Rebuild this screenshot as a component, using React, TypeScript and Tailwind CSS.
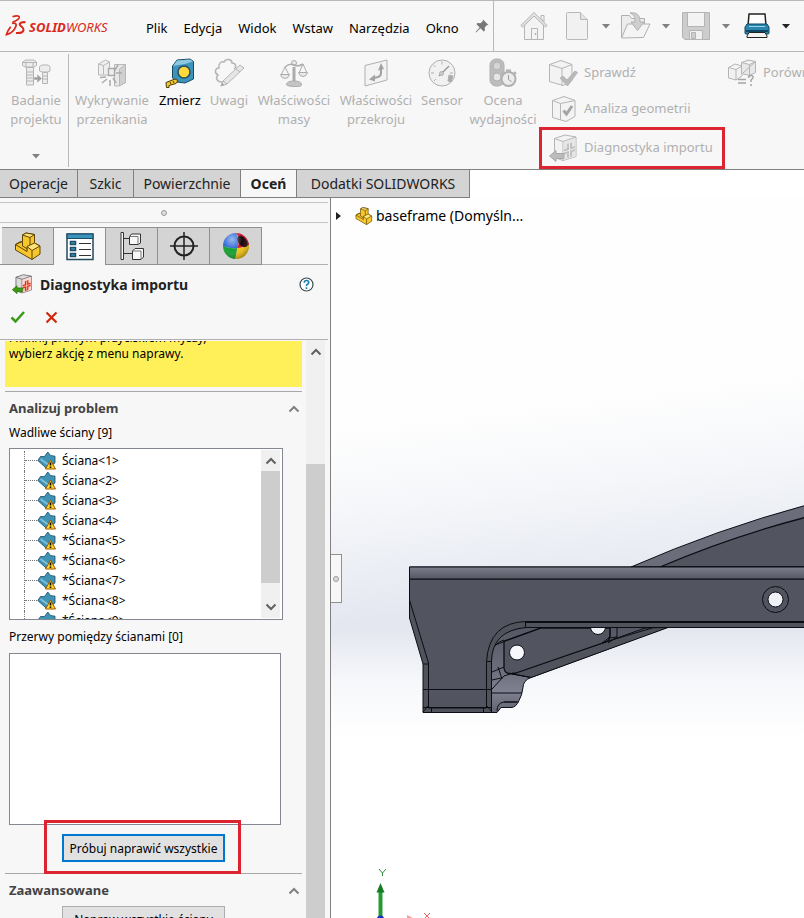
import { ReactNode } from "react";
import { clsx } from "clsx";

const MENU = ["Plik", "Edycja", "Widok", "Wstaw", "Narzędzia", "Okno"];

const FACES = [
  "Ściana<1>",
  "Ściana<2>",
  "Ściana<3>",
  "Ściana<4>",
  "*Ściana<5>",
  "*Ściana<6>",
  "*Ściana<7>",
  "*Ściana<8>",
  "*Ściana<9>",
];

/* ---------- icons ---------- */

function Caret({ dark }: { dark?: boolean }) {
  return (
    <svg width="8" height="5" viewBox="0 0 8 5" aria-hidden="true">
      <path d="M0 0h8L4 4.5z" fill={dark ? "#222" : "#808080"} />
    </svg>
  );
}

function Chevron({ down, color = "#606060" }: { down?: boolean; color?: string }) {
  return (
    <svg width="12" height="8" viewBox="0 0 12 8" fill="none" aria-hidden="true">
      <path d={down ? "M1.5 1.5 6 6l4.5-4.5" : "M1.5 6.5 6 2l4.5 4.5"} stroke={color} strokeWidth="2" />
    </svg>
  );
}

function LogoMark() {
  return (
    <svg width="22" height="22" viewBox="0 0 22 22" fill="none" stroke="#da291c" aria-hidden="true">
      <path d="M7.5 1.8c3-1.2 6.500-1.300 6.800 0 .3 1.500-3.300 4-6.800 5.400" strokeWidth="1.600" />
      <path d="M7 8.300c3.500-.8 5 .4 3.700 3.500C9.500 15 6 18.500 1.500 19.500c.7-2.800 2-5 4.200-7.700" strokeWidth="1.800" />
      <path d="M20.500 7.200c-3-.4-5.600.3-5.800 2-.2 2 4.300 3 3.800 5.800-.5 2.500-3.500 3.300-7.500 3" strokeWidth="2.100" />
    </svg>
  );
}

function PinIcon() {
  return (
    <svg width="14" height="14" viewBox="0 0 14 14" aria-hidden="true">
      <path d="M8 .5 13.500 6l-1.800.3-2 2.200.2 3.300-1.200.7L5.500 9.300 1 13.500l-.5-.5L4.700 8.500 1.500 5.300l.7-1.200 3.300.2 2.200-2z" fill="#777" />
    </svg>
  );
}

function HomeIcon() {
  return (
    <svg width="28" height="28" viewBox="0 0 28 28" fill="#f3f3f3" stroke="#b4b4b4" aria-hidden="true">
      <path d="M4.500 13v14.500h19V13L14 3.500z" />
      <path d="M21 3.500h3v6l-3-3z" />
      <path d="m.8 13.500 13.200-13 13.200 13-1.700 1.500L14 4 2.500 15z" fill="#e4e4e4" />
      <path d="M11.500 27.500v-11h6v11z" />
      <path d="M15.500 21v2" strokeWidth="1.500" />
    </svg>
  );
}

function NewIcon() {
  return (
    <svg width="22" height="28" viewBox="0 0 22 28" fill="#f1f1f1" stroke="#b8b8b8" aria-hidden="true">
      <path d="M.5 1.500q0-1 1-1h13l7 7v19q0 1-1 1h-19q-1 0-1-1z" />
      <path d="M14.500.5v7h7" fill="#e2e2e2" />
    </svg>
  );
}

function OpenIcon() {
  return (
    <svg width="32" height="28" viewBox="0 0 32 28" fill="#ececec" stroke="#b0b0b0" aria-hidden="true">
      <path d="M1.500 26V3.500h8l2 3h13V13" />
      <path d="m1.500 26 6-14H30l-6.500 13.500z" fill="#f4f4f4" />
      <path d="M10 1c7-1 10 2 10 9h4l-6.500 8.500L11 10h4c0-5-1-7-5-9z" fill="#cfcfcf" />
    </svg>
  );
}

function SaveIcon() {
  return (
    <svg width="28" height="28" viewBox="0 0 28 28" fill="#cdcdcd" stroke="#b4b4b4" aria-hidden="true">
      <path d="M.5.500h27v27H3l-2.500-2z" />
      <path d="M5.500.5h17v14h-17z" fill="#f3f3f3" />
      <path d="M7.500 18.500h13v9h-13z" fill="#f0f0f0" />
      <path d="M9.500 20.500h4v6h-4z" />
    </svg>
  );
}

function PrintIcon() {
  return (
    <svg width="26" height="26" viewBox="0 0 26 26" stroke="#222" aria-hidden="true">
      <path d="M5 1h16l1 12H4z" fill="#fff" strokeWidth="1.500" />
      <path d="M3 11h20l2 3v6q0 1-1 1H2q-1 0-1-1v-6z" fill="#2b86ad" stroke="#0d4764" />
      <path d="M5 13.500h16" stroke="#9bd3ea" />
      <path d="M2 18h22" stroke="#0d4764" strokeWidth="2" />
      <path d="M5 19.500h16L23 23v1.500H3V23z" fill="#f2f2f2" />
    </svg>
  );
}

function BoltsIcon() {
  return (
    <svg width="30" height="28" viewBox="0 0 30 28" fill="#ececec" stroke="#b5b5b5" aria-hidden="true">
      <path d="M1.500 3 5 1h8l2.500 2v3.500L13 8H4L1.500 6.500z" />
      <path d="M1.500 3.500h14M5 3.500V8M12 3.500V8" />
      <path d="M5.500 8.500h7V26h-7z" />
      <path d="M5.500 13h7m-7 3h7m-7 3h7m-7 3h7" />
      <path d="M18.500 7.500 21 6h6l2 1.500V12l-2 1h-6l-2.500-1z" />
      <path d="M21.500 13.500h5v11h-5zM21.500 17h5m-5 3h5" />
      <path d="M13.500 18.500h3V16l4 3.500-4 3.500v-2.500h-3z" fill="#9d9d9d" />
    </svg>
  );
}

function InterferenceIcon() {
  return (
    <svg width="30" height="28" viewBox="0 0 30 28" fill="#efefef" stroke="#b8b8b8" aria-hidden="true">
      <path d="m1.500 5 7-4 4 2v13H1.500z" />
      <path d="m1.500 5 5 1.500v9M6.500 6.500l6-3.500" />
      <path d="M17.500 5.500h11v18l-7 3.500h-4v-13z" fill="#e8e8e8" />
      <path d="M22.500 27V10l6-4.500v18z" fill="#d0d0d0" />
      <path d="M11.500 9.500h6v7h-6zM3 18.500l6-.5m-4 6 5-4m3 7v-6m6 3-3-5m3-5h6m-4-8-3 5" stroke="#aaa" strokeWidth="1.500" />
    </svg>
  );
}

function TapeIcon() {
  return (
    <svg width="30" height="30" viewBox="0 0 30 30" aria-hidden="true">
      <path d="m7.500 8 4.500-6 13-1 3.500 2.500V21L20 25l-8-1-4.500-4z" fill="#3d93b9" stroke="#164b63" />
      <path d="m8 8 4-5.500 13-1 3 2-8 2.500z" fill="#8cc8df" />
      <circle cx="19" cy="14" r="6" fill="#ffd93b" stroke="#274d5c" strokeWidth="1.500" />
      <path d="m1 24.500 9-3.500 3 1.500-2 3-7 2v2H1.500z" fill="#f4c92c" stroke="#4a3b0c" />
      <path d="m5 24 1 2m2-3 1 2" stroke="#4a3b0c" />
    </svg>
  );
}

function MarkupIcon() {
  return (
    <svg width="31" height="30" viewBox="0 0 31 30" fill="none" stroke="#b5b5b5" aria-hidden="true">
      <path d="M8 24c-5 0-7-4-4-7-4-2-3-7 1-7-1-4 2-7 5-6 2-4 8-3 8 1 4 0 5 4 2 6" strokeWidth="1.500" />
      <path d="m9 23 17-16 4 3-17 16-6 2z" fill="#e6e6e6" />
      <path d="m9 23 4 3M22 11l4 3" />
      <path d="m7 28 1-3 2 2z" fill="#999" />
    </svg>
  );
}

function ScaleIcon() {
  return (
    <svg width="28" height="28" viewBox="0 0 28 28" fill="#e9e9e9" stroke="#acacac" aria-hidden="true">
      <path d="M14 8v14" strokeWidth="3" />
      <circle cx="14" cy="4" r="2.500" />
      <path d="M5 8q5-4 9-2 4 2 9-1" fill="none" strokeWidth="1.500" />
      <path d="m5 8-4 8m4-8 4 8M23 5l-4 9m4-9 4 9" fill="none" />
      <path d="M.5 15.500h9q-1 4-4.500 4t-4.500-4zM18.500 13.500h9q-1 4-4.500 4t-4.500-4z" />
      <path d="M6.500 25q1-3 7.500-3t7.500 3-7.500 2.500T6.500 25z" fill="#c4c4c4" />
    </svg>
  );
}

function SectionIcon() {
  return (
    <svg width="24" height="28" viewBox="0 0 24 28" aria-hidden="true">
      <path d="M1 6.500 23 1v20L1 27z" fill="#f3f3f3" stroke="#b0b0b0" />
      <path d="M17 8v6q0 3-3 4l-6 1.500" fill="none" stroke="#a2a2a2" strokeWidth="2" />
      <path d="m17 4 3 6-6 1.500zM5 20.500l6-5v7z" fill="#a2a2a2" />
    </svg>
  );
}

function GaugeIcon() {
  return (
    <svg width="28" height="28" viewBox="0 0 28 28" fill="none" stroke="#b0b0b0" aria-hidden="true">
      <circle cx="14" cy="14" r="13" fill="#f1f1f1" />
      <path d="M14 2.500v3M3 14h3M5.500 6l2 2M25 14h-3M6 22l2-2" />
      <path d="m11 17 10-10" stroke="#999" strokeWidth="1.500" />
      <circle cx="13.500" cy="14.500" r="2" fill="#ccc" />
      <path d="m21 16 4 1-2 6-3-1z" fill="#aaa" />
    </svg>
  );
}

function PerformanceIcon() {
  return (
    <svg width="28" height="30" viewBox="0 0 28 30" fill="#ececec" stroke="#b0b0b0" aria-hidden="true">
      <rect x="1" y="1" width="14" height="27" rx="6" fill="#bdbdbd" />
      <circle cx="8" cy="8" r="4" fill="#d4d4d4" />
      <circle cx="8" cy="19" r="4" fill="#e6e6e6" />
      <circle cx="19.500" cy="21" r="7" strokeWidth="2" />
      <path d="M17 12.500h5M25 14l2 2M13.500 14l-1 1" strokeWidth="2" />
      <path d="M19.500 17v4.500l3 2" fill="none" stroke="#999" />
    </svg>
  );
}

function CubePaths() {
  return (
    <>
      <path d="m1.500 5.500 11.500-4 11 4v16l-9 5-13.500-4z" fill="#f3f3f3" />
      <path d="m1.500 5.500 12.500 4 10-4M14 9.500v17" fill="none" />
    </>
  );
}

function CheckCubeIcon() {
  return (
    <svg width="30" height="28" viewBox="0 0 30 28" stroke="#b5b5b5" aria-hidden="true">
      <CubePaths />
      <path d="m12 19 3-2 4 4 8-9 2.500 1.500L19.500 27z" fill="#b9b9b9" />
    </svg>
  );
}

function GeometryIcon() {
  return (
    <svg width="28" height="28" viewBox="0 0 28 28" stroke="#b5b5b5" aria-hidden="true">
      <g transform="translate(2 0)">
        <path d="m1.500 5.500 11.500-4 11 4v16l-9 5-13.500-4z" fill="#f3f3f3" />
        <path d="m1.500 5.500 8 3 14.500-3M9.500 8.500v16.500" fill="none" />
      </g>
      <path d="m14.500 15.500 3 3.500 5.500-8" fill="none" stroke="#a4a4a4" strokeWidth="3" />
    </svg>
  );
}

function ImportIcon({ size = 28, active }: { size?: number; active?: boolean }) {
  return (
    <svg width={size} height={size} viewBox="0 0 28 28" aria-hidden="true">
      <g stroke={active ? "#555" : "#b5b5b5"}>
        <path d="M5.500 4.500 16 1l11 2v19.500l-13 4-8.500-3z" fill={active ? "#dcdcdc" : "#f3f3f3"} />
        <path d="m5.500 4.500 8.500 3L27 3M14 7.500v19" fill="none" />
      </g>
      <path d="m14.500 8 12-4v18.500l-12 3.500z" fill={active ? "#fbd9d3" : "#e6e6e6"} />
      <path d="m18 10 5-1.500V13l3-1v5l-3 1v4.500L18 24v-4.500l-3 1v-5l3-1z" fill={active ? "#e33118" : "#c2c2c2"} />
      <path d="M20.500 9v14M15 18l11-3.500" stroke={active ? "#fbd9d3" : "#efefef"} />
      <path d="M.5 22 7 16.500v3h8v5H7v3z" fill={active ? "#3d9a10" : "#bcbcbc"} stroke={active ? "#2b7208" : "#a8a8a8"} />
    </svg>
  );
}

function CompareIcon() {
  return (
    <svg width="28" height="28" viewBox="0 0 28 28" fill="#f1f1f1" stroke="#b5b5b5" aria-hidden="true">
      <path d="M.5 8.500 7 5l7 2v10l-6 4-7.500-2zM.5 8.500l7.500 2L14 7M8 10.500V21" />
      <path d="m13.500 3.500 7-2.500 7 1.500v11l-6 3-8-2zM13.500 3.500l8 2 6-3M21.500 5.500V16M15 14l12-11" fill="#e8e8e8" />
      <path d="M10 20.500h8M10 24h8" stroke="#a5a5a5" strokeWidth="1.500" />
      <path d="M20.500 19q0-2.500 2.500-2.500t2 2.500l-2 2v2m0 2v2" fill="none" stroke="#a5a5a5" strokeWidth="1.500" />
    </svg>
  );
}

function PartIcon({ size = 28 }: { size?: number }) {
  return (
    <svg width={size} height={size} viewBox="0 0 28 28" stroke="#5e4500" strokeLinejoin="round" aria-hidden="true">
      <path d="M8.500 3 12 1l8.500 1.500V11l5.500 3v8l-8 5.500L1.500 18v-5.500l7-3z" fill="#f6c62c" />
      <path d="M8.500 3 12 1l8.500 1.500-4.500 3z" fill="#ffe27a" />
      <path d="m1.500 12.500 5-3 2 .5v4l5 3" fill="none" />
      <path d="m13 14.500 7.500-3.500 5.500 3-8 4.500z" fill="#ffe27a" />
      <path d="M16 5.500V13M18 18.500v9M1.500 12.500 13 19.500v-5" fill="none" />
    </svg>
  );
}

function PropertyIcon() {
  return (
    <svg width="28" height="28" viewBox="0 0 28 28" aria-hidden="true">
      <path d="M1 1h26v25.500H1z" fill="#fff" stroke="#244a5c" strokeWidth="1.500" />
      <path d="M1 1h26v4.500H1z" fill="#3a93bb" stroke="#1c4d66" />
      <path d="M4.500 8.500h5v3h-5zM4.500 14.500h5v3h-5zM4.500 20.500h5v3h-5z" fill="#3a93bb" stroke="#1c4d66" strokeWidth="1.500" />
      <path d="M13 10.500h12M13 16.500h12M13 22.500h12" stroke="#333" />
    </svg>
  );
}

function ConfigIcon() {
  return (
    <svg width="24" height="28" viewBox="0 0 24 28" fill="#f8f8f8" stroke="#333" aria-hidden="true">
      <path d="M1 .5h2.500v27H1zM3.500 6.500H10M3.500 21.500H13" />
      <path d="m9.500 4.500 2-2.500h9v9L18 12.500H9.500zM12.500 19l2.500-2.500h8.500V25L21 27.500h-8.500z" />
      <path d="M9.500 4.500H18v8M12.500 19H21v8.500" fill="none" stroke="#777" />
    </svg>
  );
}

function TargetIcon() {
  return (
    <svg width="28" height="28" viewBox="0 0 28 28" fill="none" stroke="#222" aria-hidden="true">
      <circle cx="14" cy="14" r="9.500" strokeWidth="2" />
      <path d="M14 0v28M0 14h28" strokeWidth="1.500" />
    </svg>
  );
}

function AppearanceIcon() {
  return (
    <svg width="28" height="28" viewBox="0 0 28 28" aria-hidden="true">
      <defs>
        <radialGradient id="ball" cx="0.35" cy="0.25" r="0.8">
          <stop offset="0" stopColor="#fff" stopOpacity="0.55" />
          <stop offset="0.5" stopColor="#fff" stopOpacity="0" />
          <stop offset="1" stopColor="#000" stopOpacity="0.35" />
        </radialGradient>
      </defs>
      <path d="M14 1A13 13 0 0 0 1 14q7 3 14 2Q18 8 14 1z" fill="#2563d4" />
      <path d="M14 1q5 6 1 15 7 0 12-3A13 13 0 0 0 14 1z" fill="#c4142c" />
      <path d="M1 14q7 3 14 2 0 6-2 11A13 13 0 0 1 1 14z" fill="#14a030" />
      <path d="M15 16q7 0 12-3a13 13 0 0 1-14 14q2-5 2-11z" fill="#f4c410" />
      <ellipse cx="20.500" cy="9.500" rx="4" ry="6.500" transform="rotate(-38 20.500 9.500)" fill="#180408" />
      <circle cx="14" cy="14" r="13" fill="url(#ball)" />
    </svg>
  );
}

function HelpIcon() {
  return (
    <svg width="15" height="15" viewBox="0 0 15 15" fill="none" aria-hidden="true">
      <circle cx="7.500" cy="7.500" r="6.500" fill="#fff" stroke="#3c4a52" strokeWidth="1.200" />
      <path d="M5.300 5.800q0-2.300 2.200-2.300t2.200 2q0 1.200-1.200 1.800T7.500 9" stroke="#1d7fae" strokeWidth="1.700" />
      <path d="M7.500 10.300V12" stroke="#1d7fae" strokeWidth="1.700" />
    </svg>
  );
}

function FaceIcon() {
  return (
    <svg width="20" height="20" viewBox="0 0 20 20" aria-hidden="true">
      <path d="M.8 9.500 3.500 5.500h4L10.800 1l2.700 3.500 4.500.7V12l-8.500 5.500z" fill="#3f93b5" stroke="#174d63" strokeWidth="0.800" />
      <path d="m3.500 8 8 6" stroke="#7cc0da" strokeWidth="2" />
      <path d="m13.500 9 5 9h-10z" fill="#ffd21f" stroke="#a05a00" strokeLinejoin="round" />
      <path d="M13.500 11.500v3m0 1v1.500" stroke="#111" strokeWidth="1.600" />
    </svg>
  );
}

/* ---------- ribbon ---------- */

interface ToolProps {
  icon: ReactNode;
  label: string;
  className?: string;
  enabled?: boolean;
}

function RibbonTool({ icon, label, className, enabled }: ToolProps) {
  return (
    <button
      type="button"
      disabled={!enabled}
      className={clsx(
        "flex shrink-0 flex-col items-center pt-1 text-[13px] leading-[19px]",
        enabled ? "text-black" : "text-[#b0b0b0]",
        className
      )}
    >
      <span className="mb-px flex h-[34px] items-center">{icon}</span>
      <span className="text-center">{label}</span>
    </button>
  );
}

function RibbonRow({ icon, label, className }: ToolProps) {
  return (
    <button
      type="button"
      disabled
      className={clsx("flex items-center gap-1.5 whitespace-nowrap text-[13px] text-[#b0b0b0]", className)}
    >
      <span className="flex w-[30px] justify-center">{icon}</span>
      {label}
    </button>
  );
}

function TopBar() {
  return (
    <header className="flex h-[52px] shrink-0 items-stretch border-y border-[#b9b9b9]">
      <div className="flex w-[138px] shrink-0 items-center gap-0.5 pl-[5px]">
        <LogoMark />
        <span className="pt-1 text-[13px] italic text-[#da291c]">
          <b>SOLID</b>WORKS
        </span>
      </div>
      <nav className="flex shrink-0 items-center gap-4 pl-2 pt-1.5 text-[13px] text-black">
        {MENU.map((item) => (
          <button key={item} type="button">
            {item}
          </button>
        ))}
        <button type="button" aria-label="Przypnij menu" className="pb-1.5">
          <PinIcon />
        </button>
      </nav>
      <div className="ml-1 flex shrink-0 items-center border-l border-[#b9b9b9] pl-[26px]">
        <button type="button" aria-label="Strona główna" disabled className="w-11">
          <HomeIcon />
        </button>
        <button type="button" aria-label="Nowy" disabled className="flex w-[56px] items-center gap-3.5 pl-0.5">
          <NewIcon />
          <Caret />
        </button>
        <button type="button" aria-label="Otwórz" disabled className="flex w-[62px] items-center gap-2.5">
          <OpenIcon />
          <Caret />
        </button>
        <button type="button" aria-label="Zapisz" disabled className="flex w-[62px] items-center gap-3">
          <SaveIcon />
          <Caret />
        </button>
        <button type="button" aria-label="Drukuj" className="flex items-center gap-3">
          <PrintIcon />
          <Caret dark />
        </button>
      </div>
    </header>
  );
}

function Ribbon() {
  return (
    <div className="flex h-[118px] shrink-0 items-stretch overflow-hidden border-b border-[#808080]">
      <div className="flex w-[68px] shrink-0 flex-col items-center pb-2.5 pl-1">
        <RibbonTool icon={<BoltsIcon />} label="Badanie projektu" className="w-16" />
        <span className="mt-auto">
          <Caret />
        </span>
      </div>
      <div className="my-0.5 w-px shrink-0 bg-[#b9b9b9]" />
      <RibbonTool icon={<InterferenceIcon />} label="Wykrywanie przenikania" className="w-[86px]" />
      <RibbonTool icon={<TapeIcon />} label="Zmierz" className="w-[50px]" enabled />
      <RibbonTool icon={<MarkupIcon />} label="Uwagi" className="w-12" />
      <RibbonTool icon={<ScaleIcon />} label="Właściwości masy" className="w-[82px]" />
      <RibbonTool icon={<SectionIcon />} label="Właściwości przekroju" className="w-[82px]" />
      <RibbonTool icon={<GaugeIcon />} label="Sensor" className="w-[50px]" />
      <RibbonTool icon={<PerformanceIcon />} label="Ocena wydajności" className="w-[72px] grow-0" />
      <div className="flex w-[186px] shrink-0 flex-col pt-0.5">
        <RibbonRow icon={<CheckCubeIcon />} label="Sprawdź" className="h-[38px] pl-[9px]" />
        <RibbonRow icon={<GeometryIcon />} label="Analiza geometrii" className="h-9 pl-[9px]" />
        <RibbonRow icon={<ImportIcon />} label="Diagnostyka importu" className="h-[43px] border-3 border-[#dc2430] pl-1.5" />
      </div>
      <div className="flex shrink-0 flex-col pt-0.5">
        <RibbonRow icon={<CompareIcon />} label="Porównaj dokumenty" className="h-[38px] pl-0.5" />
      </div>
    </div>
  );
}

function CommandTabs() {
  const tab = "border-r border-b border-[#808080] bg-[#d4d4d4]";
  return (
    <div role="tablist" className="flex h-7 shrink-0 bg-white text-[14px] text-[#222]">
      <button role="tab" type="button" className={clsx(tab, "w-[78px]")}>
        Operacje
      </button>
      <button role="tab" type="button" className={clsx(tab, "w-14")}>
        Szkic
      </button>
      <button role="tab" type="button" className={clsx(tab, "w-[107px]")}>
        Powierzchnie
      </button>
      <button role="tab" type="button" aria-selected="true" className="w-[55px] border-b border-[#808080] bg-[#f7f7f7] font-bold">
        Oceń
      </button>
      <button role="tab" type="button" className={clsx(tab, "w-[174px] border-l")}>
        Dodatki SOLIDWORKS
      </button>
    </div>
  );
}

/* ---------- property manager ---------- */

function SectionHeading({ title }: { title: string }) {
  return (
    <div className="ml-[5px] border-t border-[#a8a8a8]">
      <button type="button" className="flex h-8 w-full items-center justify-between pl-1 pr-0.5 pt-px text-[13px] font-bold text-[#444]">
        {title}
        <Chevron color="#808080" />
      </button>
    </div>
  );
}

function FaceList() {
  return (
    <div className="ml-[9px] flex h-[172px] w-[274px] overflow-hidden border border-[#828790] bg-white py-px pr-0.5">
      <ul aria-label="Wadliwe ściany" className="min-w-0 flex-1 pt-px">
        {FACES.map((face) => (
          <li key={face} className="flex h-5 items-center pl-3.5 text-[12px] text-black">
            <span className="h-5 w-[13px] border-l border-dotted border-[#777]">
              <span className="block h-2.5 border-b border-dotted border-[#777]" />
            </span>
            <FaceIcon />
            <span className="pl-[5px]">{face}</span>
          </li>
        ))}
      </ul>
      <div className="flex w-[19px] flex-col items-center bg-[#f0f0f0]">
        <span className="flex h-[21px] items-center">
          <Chevron />
        </span>
        <span className="h-28 w-full bg-[#cdcdcd]" />
        <span className="mt-auto flex h-[22px] items-center">
          <Chevron down />
        </span>
      </div>
    </div>
  );
}

function PropertyPanel() {
  const tab = "flex w-[52px] items-center justify-center border-y border-r border-[#909090] bg-[#d4d4d4]";
  return (
    <aside className="flex w-[330px] shrink-0 flex-col bg-[#f7f7f7]">
      <div className="mr-0.5 mt-1 flex h-[21px] shrink-0 items-center justify-center border-y border-[#c4c4c4]">
        <span className="size-1.5 rounded-full border border-[#999] bg-[#ddd]" />
      </div>

      <div role="tablist" className="mr-0.5 mt-1 flex h-[38px] shrink-0">
        <span className="w-0.5 border-b border-[#909090]" />
        <button role="tab" type="button" aria-label="Drzewo operacji" className={tab}>
          <PartIcon />
        </button>
        <button role="tab" type="button" aria-label="Właściwości" aria-selected="true" className="flex w-[52px] items-center justify-center border-r border-t border-[#909090]">
          <PropertyIcon />
        </button>
        <button role="tab" type="button" aria-label="Konfiguracje" className={tab}>
          <ConfigIcon />
        </button>
        <button role="tab" type="button" aria-label="Wymiary" className={tab}>
          <TargetIcon />
        </button>
        <button role="tab" type="button" aria-label="Wygląd" className={tab}>
          <AppearanceIcon />
        </button>
        <span className="flex-1 border-b border-[#b0b0b0]" />
      </div>

      <div className="flex h-[38px] shrink-0 items-center gap-2 pl-3 pr-4">
        <ImportIcon size={20} active />
        <h1 className="flex-1 text-[14px] font-bold text-[#222]">Diagnostyka importu</h1>
        <button type="button" aria-label="Pomoc">
          <HelpIcon />
        </button>
      </div>

      <div className="mr-0.5 flex h-[37px] shrink-0 items-start gap-5 border-b border-[#b0b0b0] pl-2.5 pt-[7px]">
        <button type="button" aria-label="OK">
          <svg width="16" height="14" viewBox="0 0 16 14" fill="none" aria-hidden="true">
            <path d="m1.500 7.500 4 4L14 2" stroke="#3a9a18" strokeWidth="2.500" />
          </svg>
        </button>
        <button type="button" aria-label="Anuluj">
          <svg width="12" height="14" viewBox="0 0 12 14" fill="none" aria-hidden="true">
            <path d="m.5 2.500 10 10m0-10-10 10" stroke="#d0280a" strokeWidth="2.200" />
          </svg>
        </button>
      </div>

      <div className="flex min-h-0 flex-1">
        <div className="w-[302px] overflow-hidden text-[12px] text-black">
          <div className="ml-[5px] mt-px flex h-[46px] flex-col overflow-hidden bg-[#fff05a]">
            <p className="-mt-[11px] whitespace-nowrap pl-1 leading-4">i kliknij prawym przyciskiem myszy,</p>
            <p className="pl-1 leading-4">wybierz akcję z menu naprawy.</p>
          </div>
          <div className="h-1" />
          <SectionHeading title="Analizuj problem" />
          <p className="flex h-6 items-start pl-[9px] leading-[18px]">Wadliwe ściany [9]</p>
          <FaceList />
          <p className="flex h-[33px] items-center pl-[9px] pt-px">Przerwy pomiędzy ścianami [0]</p>
          <div className="ml-[9px] h-[172px] w-[272px] border border-[#828790] bg-white" />
          <div className="flex h-12 items-start pl-[62px] pt-[9px]">
            <div className="relative">
              <button type="button" className="h-7 w-[163px] whitespace-nowrap border-2 border-[#0078d0] bg-[#e1e1e1] pt-px">
                Próbuj naprawić wszystkie
              </button>
              <span className="pointer-events-none absolute -bottom-3 -left-[18px] -right-4 -top-3.5 border-3 border-[#dc2430]" />
            </div>
          </div>
          <SectionHeading title="Zaawansowane" />
          <button type="button" className="ml-[62px] h-7 w-[163px] whitespace-nowrap border border-[#adadad] bg-[#e1e1e1]">
            Napraw wszystkie ściany
          </button>
        </div>
        <div className="ml-1 flex w-[19px] flex-col items-center bg-[#f0f0f0]">
          <span className="flex h-6 items-center">
            <Chevron />
          </span>
          <span className="mt-[100px] w-full flex-1 bg-[#cdcdcd]" />
        </div>
      </div>
    </aside>
  );
}

/* ---------- model view ---------- */

function ModelDrawing() {
  return (
    <svg className="absolute inset-0 size-full" aria-hidden="true">
      <defs>
        <linearGradient id="rim" x1="0" y1="0" x2="0" y2="1">
          <stop offset="0" stopColor="#7b7d8c" />
          <stop offset="1" stopColor="#555763" />
        </linearGradient>
        <linearGradient id="foot" x1="0" y1="0" x2="0" y2="1">
          <stop offset="0" stopColor="#555763" />
          <stop offset="0.5" stopColor="#6b6d7b" />
          <stop offset="0.75" stopColor="#7f8190" />
          <stop offset="1" stopColor="#626472" />
        </linearGradient>
      </defs>
      <g transform="translate(-331 -198)" fill="#52545f" stroke="#0c0d14">
        {/* arched plate behind the beam */}
        <path d="M631 567Q718 529 805 505.500L1400 340V567z" fill="#6b6d7b" />
        <path d="M660 567Q730 537 805 517.500L1400 360V567z" strokeWidth="1.300" />

        {/* bracket under the beam */}
        <path d="M491 627H668L531 677.500q-8 3-8 10-1 8-4 13-3 7-8 7h-10l-4 5h-6z" fill="url(#foot)" />
        <path d="M531 677.500 668 627.500 645 628 606 642 512 674z" fill="#51535c" />
        <path d="M504 641 541 628H610v8q0 5-6 6.500L516 673q-12 3-12-6z" strokeWidth="1.300" />
        <path d="M610 627v10l-8 6M617 627v10l-9 6M602 643l50-15M617 637l-9 1M513 673l-9 3-12 13M508 673l23 4.500" fill="none" />
        <path d="M495 645l46-17M492 650q3-7 12-10M492 672l12-5M498 667l4 12M492 680l9-2M492 693h30M497 711q0-8 7-9h14M504 702h13" fill="none" />
        <circle cx="517" cy="652.500" r="7.500" fill="#f7f8fb" />
        <path d="M590.500 627a7.500 7.500 0 0 0 15 0z" fill="#eff1f6" />

        {/* side flange and main body with leg */}
        <path d="M409.500 567H1400v60.500H526q-34 3-34.500 34V712.500H423V664L409.500 618z" fill="#51535c" />
        <path d="M409.500 579H1400v42.500H526q-37 1-39.500 40V708H428.500V663L409.500 600z" />
        <path d="M409.500 567H1400v12H409.500z" fill="url(#rim)" />
        <path d="M526 622h874" strokeWidth="2" />
        <path d="M525.500 621.500v6M428 689.500h59M423 664h5M487 661.500h5M487 689.500h5M423 689.500h5M423 707.500h69M431.500 708v4M483.500 708v4M423 712l5-6M492 712l-5-6M492 712.500h5" fill="none" />

        <circle cx="775.500" cy="599.500" r="13" />
        <circle cx="775.500" cy="599.500" r="7.500" fill="#eff1f7" />

        {/* axis triad */}
        <g stroke="none">
          <path d="M378.500 890h4v28h-4z" fill="#259a35" />
          <path d="m380.500 883 4 9.500h-8z" fill="#177a25" />
          <circle cx="380.500" cy="919" r="3.500" fill="#1c2fc4" />
          <path d="m407 915 6 3h-6z" fill="#f2a3a0" />
        </g>
        <path d="m379 869 3.500 4 3.500-4M382.500 873v3" fill="none" stroke="#2d8a3c" />
        <path d="m424 913 6 6m0-6-6 6" fill="none" stroke="#f0605c" />
      </g>
    </svg>
  );
}

function ModelView() {
  return (
    <main className="relative min-w-0 flex-1 overflow-hidden border-l border-[#808080] bg-[linear-gradient(180deg,transparent_60%,#ffffffb0_67%,#ffffff_75%),linear-gradient(173deg,#fefefe_30%,#f4f6f9_41%,#e4e7f0_55%)]">
      <ModelDrawing />
      <button type="button" className="relative flex items-center pl-[5px] pt-2 text-[14px] leading-5 text-black">
        <svg width="5" height="8" viewBox="0 0 5 8" aria-hidden="true">
          <path d="M0 0v8l5-4z" fill="#222" />
        </svg>
        <span className="pl-3.5 pr-[3px]">
          <PartIcon size={18} />
        </span>
        baseframe (Domyśln...
      </button>
      <button
        type="button"
        aria-label="Zwiń panel"
        className="absolute -left-px top-[356px] flex h-[49px] w-3 items-center justify-center border border-l-0 border-[#909090] bg-[#f7f7f7]"
      >
        <span className="size-1.5 rounded-full border border-[#999] bg-[#ddd]" />
      </button>
    </main>
  );
}

export default function App() {
  return (
    <div className="flex h-screen flex-col overflow-hidden bg-[#f7f7f7] font-['Noto_Sans','Open_Sans',sans-serif]">
      <TopBar />
      <Ribbon />
      <CommandTabs />
      <div className="flex min-h-0 flex-1">
        <PropertyPanel />
        <ModelView />
      </div>
    </div>
  );
}
